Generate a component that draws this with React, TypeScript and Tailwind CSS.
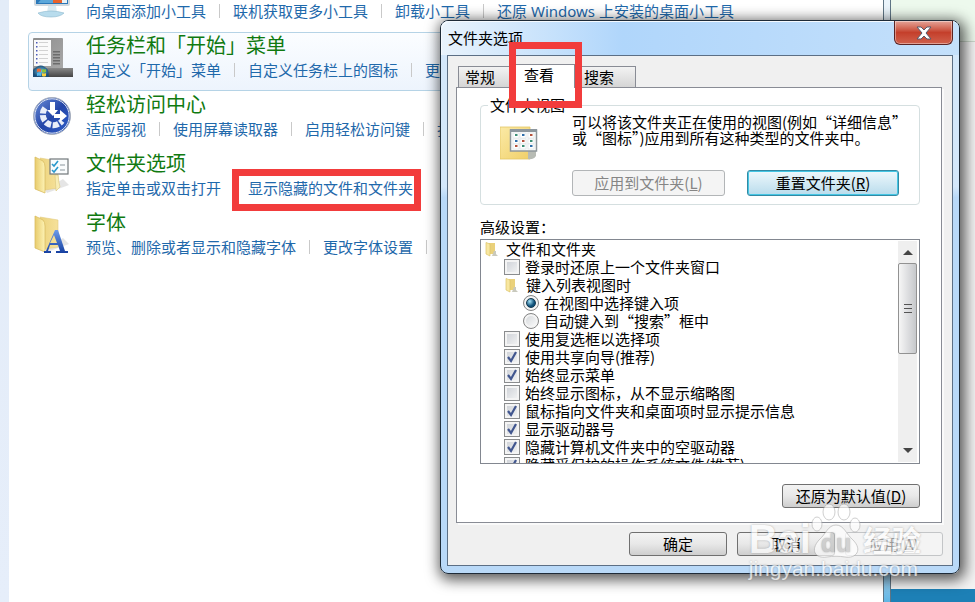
import { Fragment, useState } from "react";
import type { ReactNode } from "react";

type Entry = { title: string; icon: ReactNode; links: string[]; active?: boolean; marked?: number };
type Setting = { kind: "folder" | "check" | "radio"; text: string; level: number; on?: boolean };

function GadgetIcon() {
  return (
    <svg viewBox="0 0 40 40" className="size-10">
      <rect x="2" y="2" width="34" height="25" rx="1" fill="#2b78b8" stroke="#cfd8df" strokeWidth="2" />
      <rect x="20" y="12" width="9" height="13" fill="#e8622c" />
      <rect x="29" y="13" width="5" height="12" fill="#e9f1f6" />
      <path d="M5 25 20 8v17z" fill="#5ba7da" />
      <path d="M15 28h8l1 7h-10z" fill="#d9eaf2" />
      <path d="M5 35q13-4 26 0-4 4-13 4-10 0-13-4z" fill="#b8dced" stroke="#8cb9cf" strokeWidth=".6" />
    </svg>
  );
}

function TaskbarIcon() {
  return (
    <svg viewBox="0 0 40 40" className="size-10">
      <defs>
        <linearGradient id="bar" x2="0" y2="1"><stop stopColor="#898989" /><stop offset="1" stopColor="#454545" /></linearGradient>
        <linearGradient id="menu" x2="1" y2="1"><stop stopColor="#8d8d8d" /><stop offset="1" stopColor="#a9a9a9" /></linearGradient>
        <radialGradient id="orb"><stop stopColor="#6fc3dd" /><stop offset="1" stopColor="#1c4d78" /></radialGradient>
      </defs>
      <rect x="0" y="1" width="30" height="34" rx="1" fill="url(#menu)" />
      <rect x="1" y="3" width="17" height="26" fill="#fafafa" />
      {[5, 9, 13, 17, 21, 25].map((y) => (
        <g key={y}>
          <rect x="3" y={y} width="1.500" height="1.500" fill="#4858b8" />
          <rect x="6" y={y} width="9" height="1" fill="#d2d2d2" />
        </g>
      ))}
      {[14, 17, 20, 23, 26].map((y) => (
        <rect key={y} x="20" y={y} width="7" height="1.500" fill="#6c6c6c" />
      ))}
      <rect x="0" y="31" width="40" height="9" fill="url(#bar)" />
      <path d="M0 40V33q8-9 15 0l1 7z" fill="url(#orb)" />
      <path d="M4 32q2-1 4 0v3q-2-1-4 0z" fill="#ee6a36" /><path d="M9 32q2 1 4 0v3q-2 1-4 0z" fill="#8cc43c" />
      <path d="M4 36q2-1 4 0v3q-2-1-4 0z" fill="#53b6ea" /><path d="M9 36q2 1 4 0v3q-2 1-4 0z" fill="#fbd13c" />
    </svg>
  );
}

function EaseIcon() {
  return (
    <svg viewBox="0 0 40 40" className="size-10">
      <defs><linearGradient id="ease" x2="1" y2="1"><stop stopColor="#6f92db" /><stop offset=".5" stopColor="#2446a8" /><stop offset="1" stopColor="#2f5fcb" /></linearGradient></defs>
      <circle cx="19" cy="20" r="18.5" fill="url(#ease)" stroke="#a9b0bd" strokeWidth="1" />
      <circle cx="19" cy="20" r="17.2" fill="none" stroke="#dde3ef" strokeWidth="1" />
      <path d="M12 12A10.500 10.500 0 1 0 29 25" fill="none" stroke="#e9eef9" strokeWidth="6" strokeDasharray="6 1.600" />
      <path d="M17 6h5v8h3l-5 6-6-6h3z" fill="#fff" />
      <path d="M21 18h6v-4l7 6-7 6v-4h-6z" fill="#fff" />
    </svg>
  );
}

function FolderBase() {
  return (
    <>
      <defs>
        <linearGradient id="fa"><stop stopColor="#e8cc6c" /><stop offset="1" stopColor="#fdf2b5" /></linearGradient>
        <linearGradient id="fb"><stop stopColor="#ecd37c" /><stop offset="1" stopColor="#f6e19a" /></linearGradient>
      </defs>
      <path d="M14 38 36 30 30 24 12 35z" fill="#cccccc" opacity=".5" />
      <path d="M7 3 25 6V33L12 35z" fill="url(#fb)" stroke="#e2cb80" strokeWidth=".6" />
      <path d="M2 2 10 6Q12 8 12 12V38L2 34z" fill="url(#fa)" stroke="#d9bd62" strokeWidth=".8" />
    </>
  );
}

function FolderOptionsIcon() {
  return (
    <svg viewBox="0 0 40 40" className="size-10">
      <FolderBase />
      <path d="M22 20h3q1 9 2 12l-4 4z" fill="#f8edb5" stroke="#d8c47b" strokeWidth=".6" />
      <rect x="17" y="4" width="18" height="15" fill="#fafcfd" stroke="#71777b" strokeWidth="1.200" />
      <path d="m19 9 2 2 4-5m-6 9 2 2 4-5" fill="none" stroke="#2998cc" strokeWidth="1.600" />
      <path d="M27 10h5m-5 5h5" stroke="#8a969d" />
    </svg>
  );
}

function FontsIcon() {
  return (
    <svg viewBox="0 0 40 40" className="size-10">
      <FolderBase />
      <defs><linearGradient id="fontA" x2="0" y2="1"><stop stopColor="#6c9bea" /><stop offset="1" stopColor="#1640a0" /></linearGradient></defs>
      <path d="M22 16h3l7 21h3v2H23v-2h4l-2-6h-8l-2 6h3v2h-7v-2h2zM21 21l-4 8h7z" fillRule="evenodd" fill="url(#fontA)" />
    </svg>
  );
}

const entries: Entry[] = [
  { title: "桌面小工具", icon: <GadgetIcon />, links: ["向桌面添加小工具", "联机获取更多小工具", "卸载小工具", "还原 Windows 上安装的桌面小工具"] },
  { title: "任务栏和「开始」菜单", icon: <TaskbarIcon />, links: ["自定义「开始」菜单", "自定义任务栏上的图标", "更改「开始」菜单上的图片"], active: true },
  { title: "轻松访问中心", icon: <EaseIcon />, links: ["适应弱视", "使用屏幕读取器", "启用轻松访问键", "打开或关闭高对比度"] },
  { title: "文件夹选项", icon: <FolderOptionsIcon />, links: ["指定单击或双击打开", "显示隐藏的文件和文件夹"], marked: 1 },
  { title: "字体", icon: <FontsIcon />, links: ["预览、删除或者显示和隐藏字体", "更改字体设置", "调整 ClearType 文本"] },
];

const settings: Setting[] = [
  { kind: "folder", text: "文件和文件夹", level: 0 },
  { kind: "check", text: "登录时还原上一个文件夹窗口", level: 1 },
  { kind: "folder", text: "键入列表视图时", level: 1 },
  { kind: "radio", text: "在视图中选择键入项", level: 2, on: true },
  { kind: "radio", text: "自动键入到“搜索”框中", level: 2 },
  { kind: "check", text: "使用复选框以选择项", level: 1 },
  { kind: "check", text: "使用共享向导(推荐)", level: 1, on: true },
  { kind: "check", text: "始终显示菜单", level: 1, on: true },
  { kind: "check", text: "始终显示图标，从不显示缩略图", level: 1 },
  { kind: "check", text: "鼠标指向文件夹和桌面项时显示提示信息", level: 1, on: true },
  { kind: "check", text: "显示驱动器号", level: 1, on: true },
  { kind: "check", text: "隐藏计算机文件夹中的空驱动器", level: 1, on: true },
  { kind: "check", text: "隐藏受保护的操作系统文件(推荐)", level: 1, on: true },
];

const indents = ["pl-[3px]", "pl-[23px]", "pl-[42px]"];

function EntryRow({ entry }: { entry: Entry }) {
  return (
    <section
      className={`flex h-[59px] shrink-0 gap-[13px] rounded-sm border pl-1 ${entry.active ? "border-[#b5d3e6] bg-linear-to-b from-[#fbfdff] to-[#edf4fd]" : "border-transparent"}`}
    >
      <div className="shrink-0 pt-1">{entry.icon}</div>
      <div className="whitespace-nowrap">
        <h2 className="text-[20px] leading-[26px] text-[#107a10]">{entry.title}</h2>
        <div className="flex items-center gap-x-[13px] text-[15px] leading-[22px] text-[#1f69ab]">
          {entry.links.map((link, i) => (
            <Fragment key={link}>
              {i > 0 && <span className="h-3.5 w-px bg-[#c9c9c9]" />}
              <span className="relative">
                <a href="#link">{link}</a>
                {entry.marked === i && <span className="pointer-events-none absolute -top-2 -right-2 -bottom-3 -left-4 border-[7px] border-[#f23c3c]" />}
              </span>
            </Fragment>
          ))}
        </div>
      </div>
    </section>
  );
}

function Button({ children, look = "plain", size = "w-[98px]" }: { children: ReactNode; look?: "plain" | "focus" | "off"; size?: string }) {
  const looks = {
    plain: "h-6 border-[#707070] bg-linear-to-b from-[#f3f3f3] via-[#e8e8e8] via-50% to-[#cecece] text-black",
    focus: "h-[26px] border-[#338aa4] bg-linear-to-b from-[#eef8fc] to-[#b9dcec] text-black shadow-[inset_0_0_0_1px_#45c6e4]",
    off: "h-[26px] border-[#b2b5b7] bg-[#f4f4f4] text-[#858585]",
  };
  return (
    <button disabled={look === "off"} className={`flex items-center justify-center rounded-[3px] border whitespace-nowrap ${size} ${looks[look]}`}>
      <span>{children}</span>
    </button>
  );
}

function SmallFolder() {
  return (
    <svg viewBox="0 0 16 16" className="size-4 shrink-0">
      <path d="M5 2h6v11H6z" fill="#ead17b" />
      <path d="M2 1.500 6 3v12l-4-2z" fill="#f8e7a0" stroke="#dbc369" strokeWidth=".7" />
      <path d="M10 10h2v3l2 2H8z" fill="#c9c9bd" />
    </svg>
  );
}

function SettingRow({ item }: { item: Setting }) {
  const [on, setOn] = useState(!!item.on);
  if (item.kind === "folder") {
    return (
      <div className={`flex h-[18px] items-center gap-1.5 ${indents[item.level]}`}>
        <SmallFolder />
        {item.text}
      </div>
    );
  }
  const round = item.kind === "radio";
  return (
    <label className={`flex h-[18px] items-center gap-[5px] whitespace-nowrap ${indents[item.level]}`}>
      <span className="grid size-4 shrink-0 place-items-center">
        <input
          type={round ? "radio" : "checkbox"}
          name={round ? "typing" : undefined}
          defaultChecked={on}
          onChange={(e) => setOn(e.target.checked)}
          className={
            round
              ? "peer col-start-1 row-start-1 size-4 appearance-none rounded-full border border-[#858585] bg-linear-to-br from-[#d0d3d6] to-white shadow-[inset_0_0_0_2px_#f4f4f4]"
              : "peer col-start-1 row-start-1 size-4 appearance-none border border-[#8a8c8e] bg-linear-to-br from-[#cbcfd5] to-[#f6f6f6] shadow-[inset_0_0_0_2px_#f4f4f4]"
          }
        />
        {round ? (
          <span className="pointer-events-none col-start-1 row-start-1 hidden size-2.5 rounded-full border border-[#12384f] bg-radial-[at_35%_30%] from-[#a8e4f8] to-[#0d4f78] to-60% peer-checked:block" />
        ) : (
          <svg viewBox="0 0 16 16" className="pointer-events-none col-start-1 row-start-1 hidden size-4 peer-checked:block">
            <path d="m4 8 3 4 5-9" fill="none" stroke="#41568f" strokeWidth="2.200" />
          </svg>
        )}
      </span>
      {item.text}
    </label>
  );
}

function ViewsIcon() {
  return (
    <svg viewBox="0 0 40 36" className="h-9 w-10 shrink-0">
      <defs><linearGradient id="views" x2="1" y2="1"><stop stopColor="#fbeaa6" /><stop offset="1" stopColor="#f0cf68" /></linearGradient></defs>
      <path d="M0 1h30v32H0z" fill="url(#views)" stroke="#e3c664" strokeWidth=".8" />
      <path d="M28 25h8v5q-3 4-8 3z" fill="#b7bbb4" />
      <rect x="10.500" y="4" width="26" height="21" fill="#f9fbfb" stroke="#8f979b" strokeWidth="1.500" />
      <path d="M10 3h27v3H10z" fill="#8d979e" />
      {[8, 14, 19].map((y, row) =>
        [14, 21, 29].map((x, col) => (
          <g key={`${x}-${y}`}>
            <rect x={x - 1} y={y - 1} width="6" height="5" fill="#fff" stroke="#d9dfe1" strokeWidth=".6" />
            <rect x={x + 1} y={y} width="2.500" height="2" fill={["#3d8f76", "#2e6eaa", "#b5523c"][(row + col) % 3]} />
          </g>
        )),
      )}
    </svg>
  );
}

function ScrollBar() {
  return (
    <div className="my-px mr-0.5 flex w-[19px] shrink-0 flex-col bg-[#efefef]">
      <button aria-label="向上滚动" className="grid h-[22px] place-items-center">
        <svg viewBox="0 0 10 6" className="h-1.5 w-2.5"><path d="M0 6 5 1l5 5z" fill="#454545" /></svg>
      </button>
      <div className="flex h-[91px] flex-col items-center justify-center gap-[3px] rounded-xs border border-[#929292] bg-linear-to-r from-[#f6f6f6] via-[#dedfe1] to-[#c6c8cb]">
        <i className="h-px w-2 bg-[#555]" />
        <i className="h-px w-2 bg-[#555]" />
        <i className="h-px w-2 bg-[#555]" />
      </div>
      <button aria-label="向下滚动" className="mt-auto grid h-[22px] place-items-center">
        <svg viewBox="0 0 10 6" className="h-1.5 w-2.5"><path d="m0 0 5 5 5-5z" fill="#454545" /></svg>
      </button>
    </div>
  );
}

function Watermark() {
  return (
    <div aria-hidden="true" className="pointer-events-none absolute right-[38px] -bottom-2 text-white opacity-70 [text-shadow:0_0_2px_#888]">
      <div className="flex items-end leading-9 font-bold">
        <span className="font-['Liberation_Sans'] text-[40px]">Bai</span>
        <span className="relative grid h-14 w-[50px] place-items-center">
          <svg viewBox="0 0 50 56" className="col-start-1 row-start-1 h-14 w-[50px]" stroke="#aaa" strokeWidth=".8" fill="#fff">
            <ellipse cx="6" cy="21" rx="5" ry="7" />
            <ellipse cx="18" cy="9" rx="6" ry="8" />
            <ellipse cx="33" cy="9" rx="6" ry="8" />
            <ellipse cx="44" cy="22" rx="5" ry="7" />
            <path d="M25 22c8 0 10 9 17 15 10 10 3 19-8 17-6-1-12-1-18 0C4 56-1 47 8 37c7-6 9-15 17-15z" />
          </svg>
          <span className="col-start-1 row-start-1 pt-6 font-['Liberation_Sans'] text-[25px] text-[#c4c4c4]">du</span>
        </span>
        <span className="ml-0.5 text-[29px]">经验</span>
      </div>
      <div className="font-['Liberation_Sans'] text-[21px] leading-6">jingyan.baidu.com</div>
    </div>
  );
}

function FolderDialog() {
  return (
    <div
      role="dialog"
      aria-label="文件夹选项"
      className="absolute top-5 left-[440px] w-[520px] rounded-lg border border-[#1e2b38] bg-linear-to-b from-[#d4e8fb] from-30% to-[#b9d9f8] to-32% font-['Noto_Sans_CJK_SC',sans-serif] text-[15px] leading-4 text-black shadow-[2px_3px_14px_3px_rgba(0,0,0,0.65)]"
    >
      <div className="rounded-t-lg bg-linear-to-r from-[#e9f3fc] via-[#b0d6fb] via-35% to-[#c4e0fb] shadow-[inset_1px_1px_0_#f5faff]">
        <header className="flex h-[34px] items-start justify-between pr-1.5 pl-[7px]">
          <h1 className="leading-[34px]">文件夹选项</h1>
          <button aria-label="关闭" className="grid h-6 w-[59px] place-items-center rounded-b-md border border-t-0 border-[#5b2424] bg-linear-to-b from-[#e3a398] via-[#c43f2b] via-50% to-[#d0604c] shadow-[inset_0_0_0_1px_rgba(255,255,255,0.4)]">
            <svg viewBox="0 0 16 14" className="h-3.5 w-4"><path d="M1 1h4l3 3 3-3h4l-5 6 5 6h-4l-3-3-3 3H1l5-6z" fill="#fff" stroke="#565b6c" /></svg>
          </button>
        </header>
      </div>
      <div className="mx-1.5 mb-[7px] border border-[#5c6f85] bg-[#f0f0f0] pt-2 pr-[10px] pb-[9px] pl-2">
        <div role="tablist" className="flex items-end pl-0.5">
          <button role="tab" className="h-[21px] w-[57px] border border-b-0 border-[#898c95] bg-linear-to-b from-[#f3f3f3] to-[#d5d5d5] pl-1.5 text-left">常规</button>
          <button role="tab" aria-selected="true" className="relative -mb-px h-6 w-[60px] border border-b-0 border-[#898c95] bg-white pb-1 pl-2 text-left">
            查看
            <span className="pointer-events-none absolute -top-[23px] -left-[7px] h-[66px] w-[73px] border-[7px] border-[#f23c3c]" />
          </button>
          <button role="tab" className="h-[21px] w-[61px] border border-b-0 border-[#898c95] bg-linear-to-b from-[#f3f3f3] to-[#d5d5d5] pl-2 text-left">搜索</button>
        </div>
        <div className="border border-[#898c95] bg-white pt-2 pr-[21px] pb-3.5 pl-[23px] shadow-[2px_2px_0_#fafafa]">
          <fieldset className="min-w-0 rounded-sm border border-[#d5dfe0] pr-5 pb-2 pl-[19px]">
            <legend className="-ml-3 px-0.5 leading-[18px]">文件夹视图</legend>
            <div className="flex gap-8">
              <div className="pt-3"><ViewsIcon /></div>
              <div className="min-w-0 flex-1">
                <p className="whitespace-nowrap">
                  可以将该文件夹正在使用的视图(例如“详细信息”
                  <br />
                  或“图标”)应用到所有这种类型的文件夹中。
                </p>
                <div className="mt-6 flex justify-between">
                  <Button look="off" size="w-[153px]">应用到文件夹(<u>L</u>)</Button>
                  <Button look="focus" size="w-[152px]">重置文件夹(<u>R</u>)</Button>
                </div>
              </div>
            </div>
          </fieldset>
          <h3 className="mt-3 leading-5">高级设置：</h3>
          <div className="mt-0.5 flex h-[225px] border border-[#828790]">
            <div className="flex-1 overflow-hidden">
              {settings.map((item) => <SettingRow key={item.text} item={item} />)}
            </div>
            <ScrollBar />
          </div>
          <div className="mt-5 flex justify-end">
            <Button size="w-[138px]">还原为默认值(<u>D</u>)</Button>
          </div>
        </div>
        <footer className="-mr-px flex items-center justify-end gap-[10px] pt-[9px]">
          <Button>确定</Button>
          <Button>取消</Button>
          <button disabled className="h-6 w-[98px] rounded-[3px] border border-[#c3c5c7] bg-[#f4f4f4] text-[#9a9a9a]">应用(<u>A</u>)</button>
        </footer>
      </div>
      <Watermark />
    </div>
  );
}

export default function App() {
  return (
    <div lang="zh-CN" className="relative flex h-screen overflow-hidden bg-white font-['Noto_Sans','Noto_Sans_CJK_SC',sans-serif]">
      <div className="w-[9px] shrink-0 bg-linear-to-b from-[#e3ecf8] to-[#e6eefa]" />
      <main className="-mt-[27px] flex min-w-0 flex-1 flex-col overflow-hidden pl-[19px]">
        {entries.map((entry) => <EntryRow key={entry.title} entry={entry} />)}
      </main>
      <div className="w-2 shrink-0 border-x border-[#5f7585] bg-linear-to-b from-[#eaf4fb] from-90% to-[#5eb5e4]" />
      <aside className="flex w-[84px] shrink-0 flex-col bg-[#f3f3f3]">
        <div className="h-[42px] border-b border-[#ccd8cc] bg-[#edf9ed]" />
        <div className="mt-auto h-[13px] bg-[#1d80b6]" />
      </aside>
      <FolderDialog />
    </div>
  );
}
